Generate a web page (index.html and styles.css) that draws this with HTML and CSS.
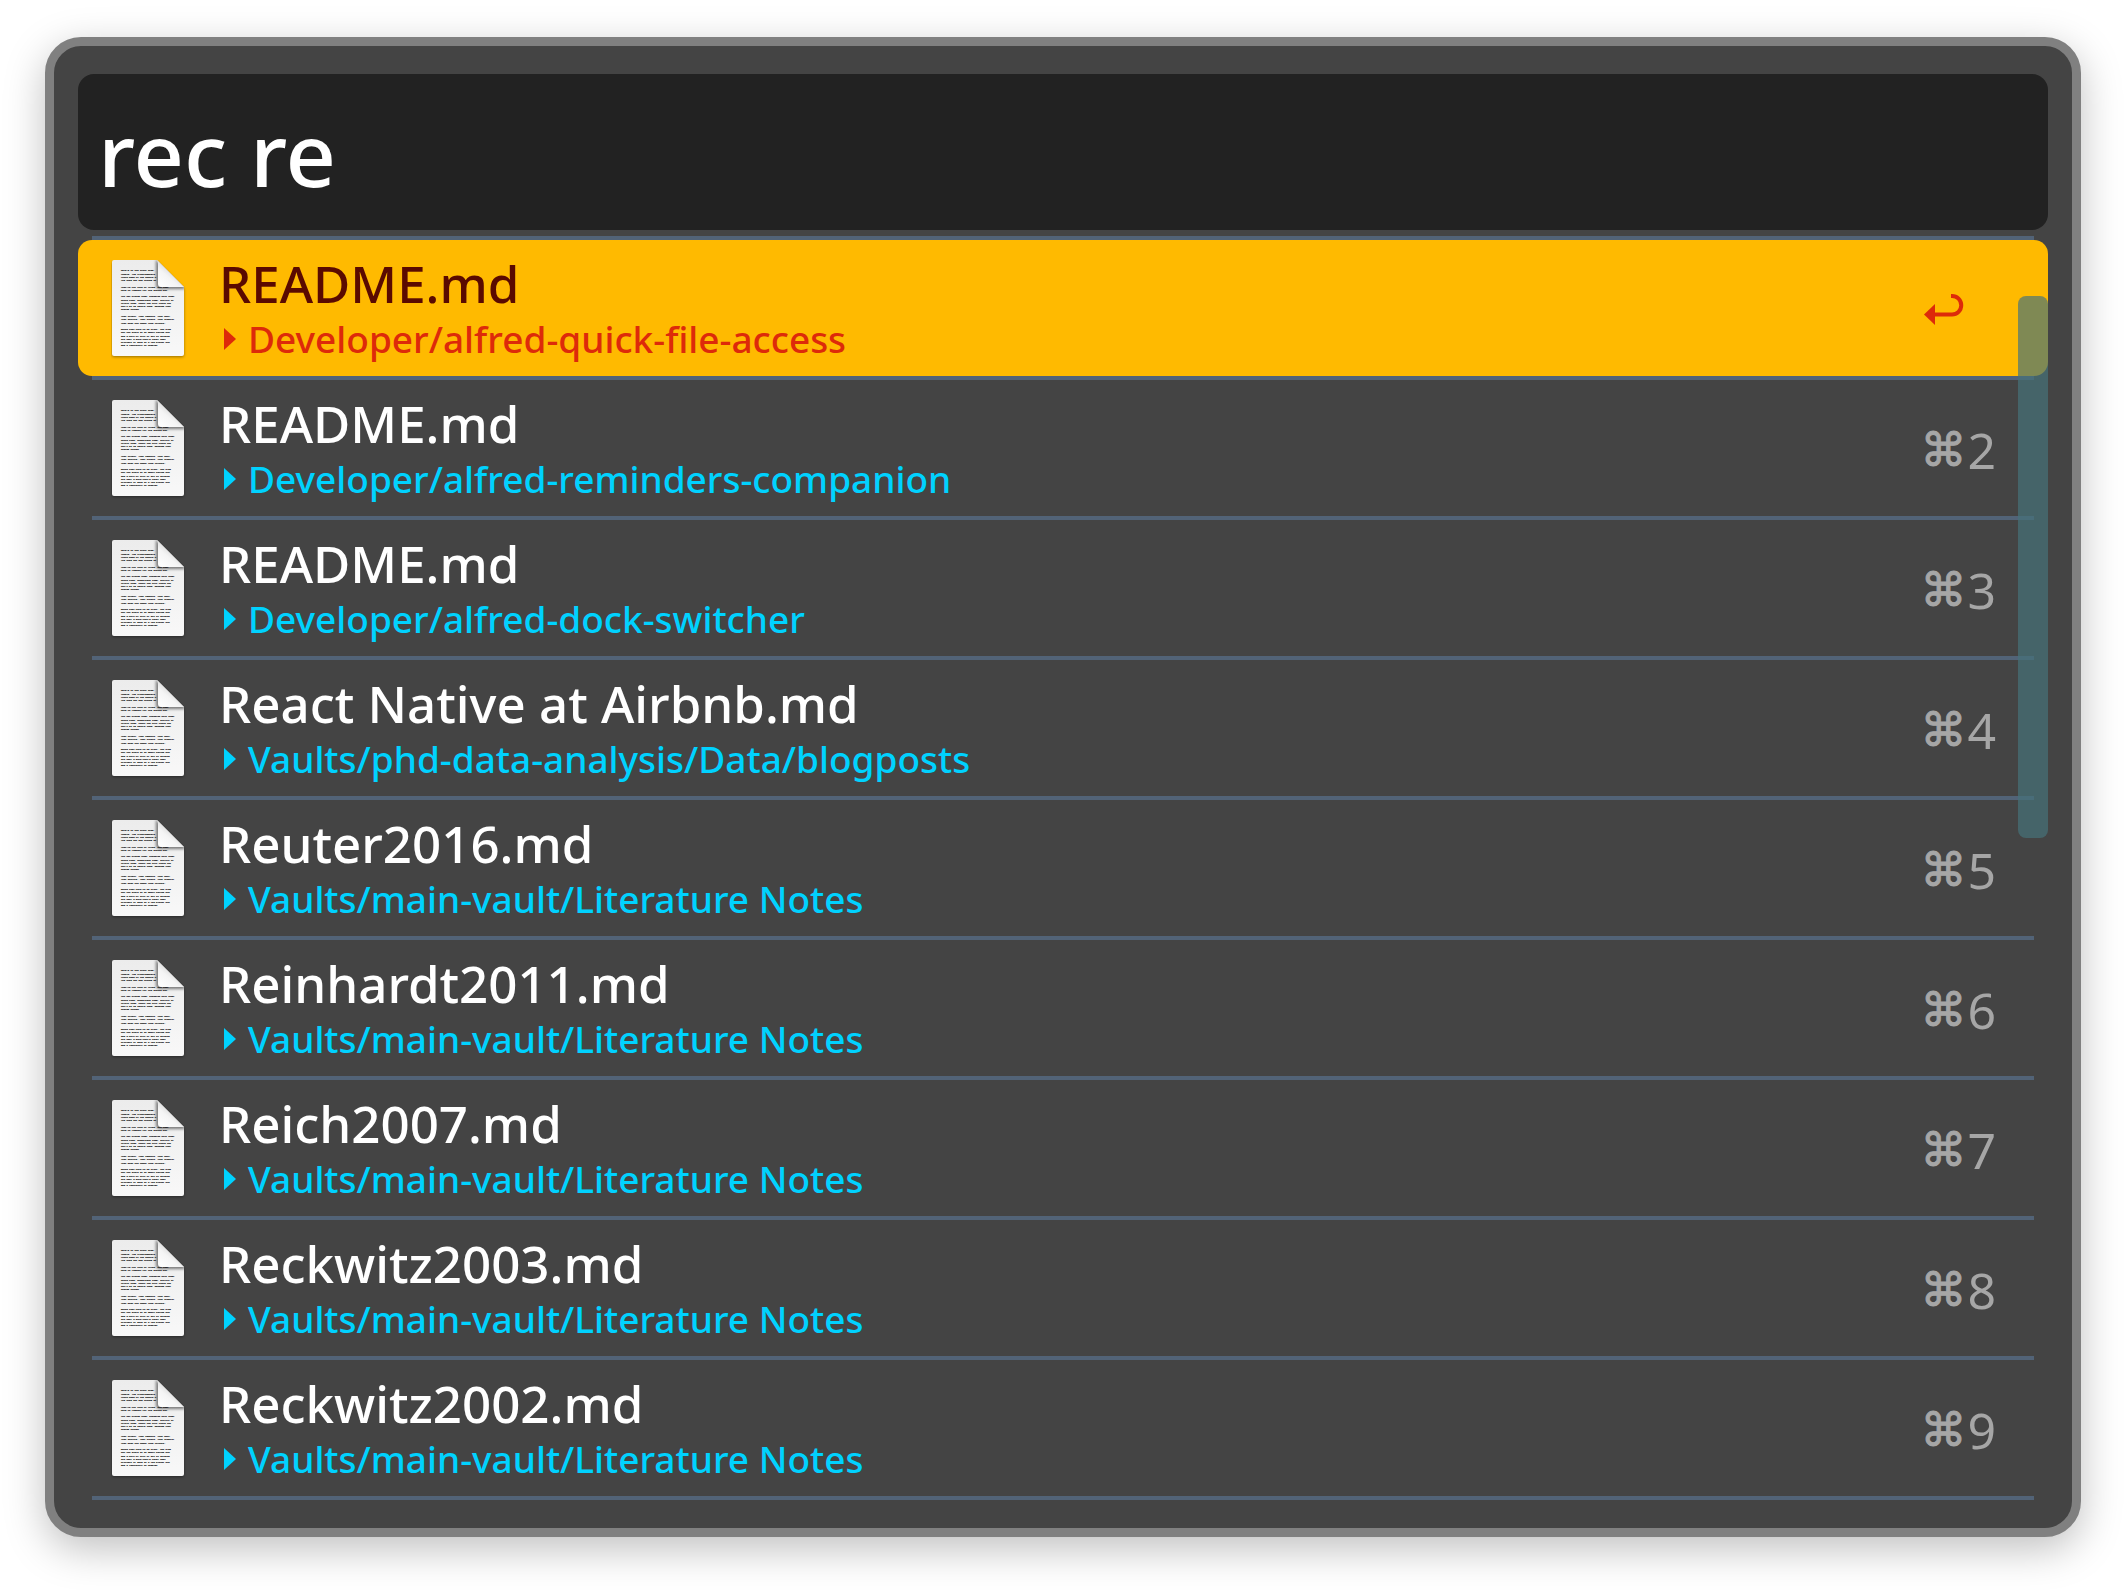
FILE: index.html
```html
<!DOCTYPE html>
<html lang="en">
<head>
<meta charset="utf-8">
<title>File search</title>
<link rel="stylesheet" href="styles.css">
</head>
<body>
<svg class="sprite" aria-hidden="true">
  <defs>
    <linearGradient id="paper" x1="0" y1="0" x2="0" y2="1">
      <stop offset="0" stop-color="#ececec"/><stop offset="1" stop-color="#f8f8f8"/>
    </linearGradient>
    <linearGradient id="curl" x1="0" y1="1" x2="0.6" y2="0.3">
      <stop offset="0" stop-color="#ffffff"/><stop offset="0.6" stop-color="#f4f4f4"/><stop offset="1" stop-color="#d2d2d2"/>
    </linearGradient>
    <filter id="soft" x="-30%" y="-30%" width="160%" height="160%"><feGaussianBlur stdDeviation="1.6"/></filter>
    <clipPath id="sheet"><path d="M3 0H46L73 27V94a2 2 0 0 1-2 2H3a2 2 0 0 1-2-2V2a2 2 0 0 1 2-2z"/></clipPath>
  </defs>
  <symbol id="arrow" viewBox="0 0 12 22"><path d="M0 0L12 11L0 22z" fill="currentColor"/></symbol>
  <symbol id="return" viewBox="0 0 40 32">
    <path d="M0 20.500L11 10V31z" fill="currentColor"/>
    <path d="M10 20.500H28A9.250 9.250 0 0 0 28 2H27" fill="none" stroke="currentColor" stroke-width="4"/>
  </symbol>
</svg>

<main class="window">
  <input class="query" type="text" value="rec re" aria-label="Search files">
  <div class="results">
    <ul class="list">
      <li class="item">
        <button class="row selected" type="button">
          <svg class="doc" viewBox="0 0 76 100" aria-hidden="true">
            <g id="doc">
              <path d="M3 2H46L73 29V95a2 2 0 0 1-2 2H3a2 2 0 0 1-2-2V4a2 2 0 0 1 2-2z" fill="#000" opacity=".4" filter="url(#soft)"/>
              <path d="M3 0H46L73 27V94a2 2 0 0 1-2 2H3a2 2 0 0 1-2-2V2a2 2 0 0 1 2-2z" fill="url(#paper)"/>
              <g class="print">
                <text x="10" y="11.4">Here's to the crazy ones.</text>
                <text x="10" y="14.6">rebels. The troublemakers.</text>
                <text x="10" y="17.9">round pegs in the square h</text>
                <text x="10" y="21.2">The ones who see things di</text>
                <text x="10" y="27.6">They're not fond of rules. And they</text>
                <text x="10" y="30.9">have no respect for the status quo.</text>
                <text x="10" y="37.3">You can praise them, disagree with them,</text>
                <text x="10" y="40.6">quote them, disbelieve them, glorify or</text>
                <text x="10" y="43.9">vilify them. About the only thing you</text>
                <text x="10" y="47.1">can't do is ignore them. Because they</text>
                <text x="10" y="50.4">change things.</text>
                <text x="10" y="57">They invent. They imagine. They heal.</text>
                <text x="10" y="60.2">They explore. They create. They inspire.</text>
                <text x="10" y="63.5">They push the human race forward.</text>
                <text x="10" y="70">Maybe they have to be crazy. How else</text>
                <text x="10" y="73.3">can you stare at an empty canvas and</text>
                <text x="10" y="76.6">see a work of art? Or sit in silence</text>
                <text x="10" y="79.9">and hear a song that's never been</text>
                <text x="10" y="83.1">written? Or gaze at a red planet and</text>
                <text x="10" y="86.4">see a laboratory on wheels?</text>
              </g>
              <g clip-path="url(#sheet)">
                <path d="M45 0V25q0 4 4 4H74V27L46 0z" fill="#000" opacity=".5" filter="url(#soft)"/>
              </g>
              <path d="M46 0Q47 2 47 6V24q0 3 3 3H73z" fill="url(#curl)"/>
            </g>
          </svg>
          <span class="text"><span class="title">README.md</span><span class="path"><svg class="arrow" aria-hidden="true"><use href="#arrow"/></svg>Developer/alfred-quick-file-access</span></span>
          <svg class="return" role="img" aria-label="Return"><use href="#return"/></svg>
        </button>
      </li>
      <li class="item">
        <button class="row" type="button">
          <svg class="doc" viewBox="0 0 76 100" aria-hidden="true"><use href="#doc"/></svg>
          <span class="text"><span class="title">README.md</span><span class="path"><svg class="arrow" aria-hidden="true"><use href="#arrow"/></svg>Developer/alfred-reminders-companion</span></span>
          <span class="key"><span class="cmd">⌘</span>2</span>
        </button>
      </li>
      <li class="item">
        <button class="row" type="button">
          <svg class="doc" viewBox="0 0 76 100" aria-hidden="true"><use href="#doc"/></svg>
          <span class="text"><span class="title">README.md</span><span class="path"><svg class="arrow" aria-hidden="true"><use href="#arrow"/></svg>Developer/alfred-dock-switcher</span></span>
          <span class="key"><span class="cmd">⌘</span>3</span>
        </button>
      </li>
      <li class="item">
        <button class="row" type="button">
          <svg class="doc" viewBox="0 0 76 100" aria-hidden="true"><use href="#doc"/></svg>
          <span class="text"><span class="title">React Native at Airbnb.md</span><span class="path"><svg class="arrow" aria-hidden="true"><use href="#arrow"/></svg>Vaults/phd-data-analysis/Data/blogposts</span></span>
          <span class="key"><span class="cmd">⌘</span>4</span>
        </button>
      </li>
      <li class="item">
        <button class="row" type="button">
          <svg class="doc" viewBox="0 0 76 100" aria-hidden="true"><use href="#doc"/></svg>
          <span class="text"><span class="title">Reuter2016.md</span><span class="path"><svg class="arrow" aria-hidden="true"><use href="#arrow"/></svg>Vaults/main-vault/Literature Notes</span></span>
          <span class="key"><span class="cmd">⌘</span>5</span>
        </button>
      </li>
      <li class="item">
        <button class="row" type="button">
          <svg class="doc" viewBox="0 0 76 100" aria-hidden="true"><use href="#doc"/></svg>
          <span class="text"><span class="title">Reinhardt2011.md</span><span class="path"><svg class="arrow" aria-hidden="true"><use href="#arrow"/></svg>Vaults/main-vault/Literature Notes</span></span>
          <span class="key"><span class="cmd">⌘</span>6</span>
        </button>
      </li>
      <li class="item">
        <button class="row" type="button">
          <svg class="doc" viewBox="0 0 76 100" aria-hidden="true"><use href="#doc"/></svg>
          <span class="text"><span class="title">Reich2007.md</span><span class="path"><svg class="arrow" aria-hidden="true"><use href="#arrow"/></svg>Vaults/main-vault/Literature Notes</span></span>
          <span class="key"><span class="cmd">⌘</span>7</span>
        </button>
      </li>
      <li class="item">
        <button class="row" type="button">
          <svg class="doc" viewBox="0 0 76 100" aria-hidden="true"><use href="#doc"/></svg>
          <span class="text"><span class="title">Reckwitz2003.md</span><span class="path"><svg class="arrow" aria-hidden="true"><use href="#arrow"/></svg>Vaults/main-vault/Literature Notes</span></span>
          <span class="key"><span class="cmd">⌘</span>8</span>
        </button>
      </li>
      <li class="item">
        <button class="row" type="button">
          <svg class="doc" viewBox="0 0 76 100" aria-hidden="true"><use href="#doc"/></svg>
          <span class="text"><span class="title">Reckwitz2002.md</span><span class="path"><svg class="arrow" aria-hidden="true"><use href="#arrow"/></svg>Vaults/main-vault/Literature Notes</span></span>
          <span class="key"><span class="cmd">⌘</span>9</span>
        </button>
      </li>
    </ul>
    <div class="scroll-thumb"></div>
  </div>
</main>
</body>
</html>
```
FILE: styles.css
```css
* {
  box-sizing: border-box;
}

body {
  margin: 0;
  padding: 37px 45px 53px;
  background: #fff;
  font-family: "Noto Sans", "Open Sans", sans-serif;
  font-weight: 500;
}

.sprite {
  position: absolute;
  width: 0;
  height: 0;
}

.print {
  font-family: "Liberation Mono", monospace;
  font-size: 2.25px;
  font-weight: 700;
  fill: #222;
  stroke: #222;
  stroke-width: 0.15;
}

.window {
  display: flex;
  flex-direction: column;
  gap: 6px;
  padding: 28px 24px;
  border: 9px solid #808080;
  border-radius: 36px;
  background: #444;
  box-shadow: 0 12px 40px rgba(0, 0, 0, 0.25);
}

.query {
  width: 100%;
  height: 156px;
  padding: 2px 20px 0;
  border: 0;
  border-radius: 16px;
  outline: 0;
  background: #222;
  color: #fff;
  font: inherit;
  font-size: 88px;
}

.results {
  position: relative;
}

.list {
  margin: 0;
  padding: 0;
  list-style: none;
}

.list::before,
.item::after {
  content: "";
  display: block;
  height: 4px;
  margin: 0 14px;
  background: #526377;
}

.row {
  display: flex;
  align-items: center;
  width: 100%;
  height: 136px;
  padding: 0 52px 0 33px;
  border: 0;
  border-radius: 14px;
  background: none;
  color: #fff;
  font: inherit;
  text-align: left;
}

.selected {
  background: #ffba00;
  color: #5a0a00;
}

.doc {
  width: 76px;
  height: 100px;
  margin-top: 4px;
}

.text {
  display: flex;
  flex: 1;
  flex-direction: column;
  gap: 2px;
  margin-left: 32px;
  padding-top: 2px;
}

.title {
  font-size: 51px;
  line-height: 58px;
}

.path {
  display: flex;
  align-items: center;
  gap: 12px;
  padding-left: 5px;
  color: #00d2ff;
  font-size: 37px;
  line-height: 50px;
}

.selected .path,
.return {
  color: #dd2a0a;
}

.arrow {
  width: 12px;
  height: 22px;
}

.return {
  width: 40px;
  height: 32px;
  margin-top: 4px;
  margin-right: 32px;
}

.key {
  display: flex;
  align-items: center;
  gap: 1px;
  padding-top: 4px;
  color: #a6a6a6;
  font-size: 50px;
  font-weight: 400;
  line-height: 60px;
}

.cmd {
  font-family: "DejaVu Sans", sans-serif;
  font-size: 46px;
  -webkit-text-stroke: 1px;
}

.scroll-thumb {
  position: absolute;
  top: 60px;
  right: 0;
  width: 30px;
  height: 542px;
  border-radius: 8px;
  background: rgba(69, 114, 122, 0.69);
}
```
